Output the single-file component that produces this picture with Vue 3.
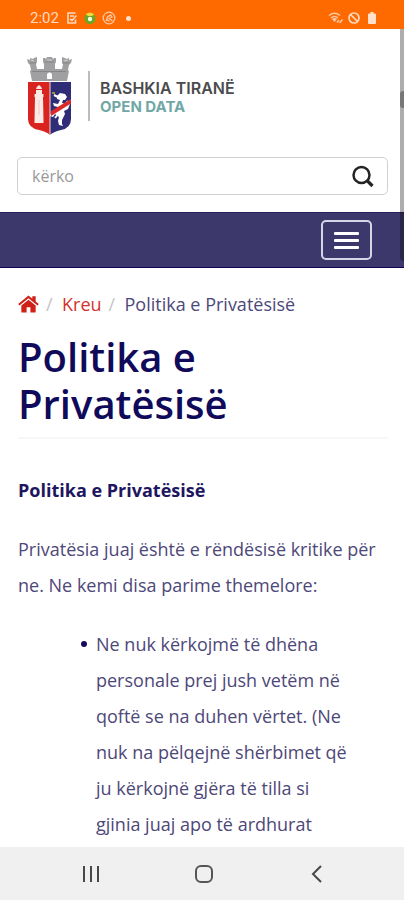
<script setup>
import { ref } from 'vue'

const query = ref('')
const principles = [
  'Ne nuk kërkojmë të dhëna personale prej jush vetëm në qoftë se na duhen vërtet. (Ne nuk na pëlqejnë shërbimet që ju kërkojnë gjëra të tilla si gjinia juaj apo të ardhurat'
]
</script>

<template>
  <div class="screen">
    <div class="status">
      <div class="status-group">
        <span class="clock">2:02</span>
        <svg width="12" height="14" viewBox="0 0 12 14" fill="none" stroke="#ffd9c0" stroke-width="1.6">
          <path d="M9.500 8.500V12H2V2h7.500M4 5h4M4 8l2 1.500L10.500 4.500" />
        </svg>
        <svg width="14" height="14" viewBox="0 0 14 14">
          <circle cx="7" cy="7.500" r="5.500" fill="#6aa524" />
          <path d="M3 3.500C4 1 10 1 11 3.500L9 5H5z" fill="#e8dc3c" />
          <circle cx="7" cy="8" r="2.200" fill="#f4ffe8" />
        </svg>
        <svg width="14" height="14" viewBox="0 0 14 14" fill="none" stroke="#ffc7a0" stroke-width="1.300">
          <circle cx="7" cy="7" r="5.800" />
          <path d="M4 10l1.500-4 3-2 1.500 2-3 1.500 3.500 2.500M4.500 8.500l3 2" />
        </svg>
        <span class="dot"></span>
      </div>
      <div class="status-group right">
        <svg width="16" height="14" viewBox="0 0 16 14" fill="none" stroke="#ffc9a5" stroke-width="1.500">
          <path d="M1 4.500q5.500-4.500 11 0M3 7q3.500-3 7 0" />
          <path d="M4 8q2.500-2 5 0L6.500 11z" fill="#ffc9a5" stroke="none" />
          <path d="M9 11.500l2-2.500M11.500 12l3-3.500" />
        </svg>
        <svg width="14" height="14" viewBox="0 0 14 14" fill="none" stroke="#ffd9c0" stroke-width="1.700">
          <circle cx="7" cy="7" r="5" />
          <path d="M3.500 3.500l7 7" />
        </svg>
        <svg class="battery" width="10" height="14" viewBox="0 0 10 14" fill="#ffe0cc">
          <path d="M3.500 1h3v1.500H8a1 1 0 0 1 1 1V12a1 1 0 0 1-1 1H2a1 1 0 0 1-1-1V3.500a1 1 0 0 1 1-1h1.500z" />
        </svg>
      </div>
    </div>

    <div class="page">
      <div class="scroll-track"><div class="scroll-thumb"></div></div>
      <header class="masthead">
        <a class="brand" href="#">
          <svg class="crest" width="48" height="82" viewBox="0 0 48 82" aria-hidden="true">
            <path d="M6 26L4 16l1-1-1-5-2-2L1 4l3 1V3l3 1 1-1 3-1v5l-1 2 1 5h7V9l-1-2V3h2l1 1 1-2h5l1 2 1-1h2v4l-1 2v5h7l1-5-1-2V2l3 1 1 1 3-1v2l3-1-1 4-2 2-1 5 1 1-2 10z" fill="#a0a0a2" />
            <path d="M4 8h6M36 8h7M19 7h9M6 16.500h34" stroke="#858588" stroke-width="1" />
            <path d="M5 5l3 1M38 6l4-1M21 5h5" stroke="#d2d2d3" stroke-width="1" />
            <path d="M21 24v-4a2.500 2.500 0 0 1 5 0v4z" fill="#fff" />
            <path d="M2 27h22v53q-3-3-11-5Q2 73 2 64z" fill="#d9231f" />
            <path d="M24 27h21v37q0 9-10 11-8 2-11 5z" fill="#302d77" />
            <path d="M24 27v53" stroke="#e7dbe6" stroke-width="1" />
            <path d="M8.500 65h9v3h-9zM9 42h8l.5 23h-9zM8.500 39h9v3h-9zM10 35h6v4h-6zM10 34q0-2 3-4 3 2 3 4z" fill="#fae9e5" />
            <path d="M13 45v15" stroke="#f0cac3" stroke-width="1" />
            <path d="M31 41l3-3 5 1 2 3-2 3h-2l-1 3 4 1 3-2 1 2-2 5-4 2 1 3-3 6 0 4 1 2-4-1-1-4 1-4-4-3-2 3-3-1 1-3 4-2 3-4-4-1-1-3 5 1 2-4-3-1z" fill="#fff" />
            <path d="M28 40l4 2M39 50l3-4M33 58l-4 5" stroke="#fff" stroke-width="2" />
            <path d="M26 37h3v2h-3z" fill="#998f3c" />
            <path d="M25 56l20-12v4.500L25 61z" fill="#da2928" />
          </svg>
          <span class="divider"></span>
          <span class="brand-text">
            <span class="city">BASHKIA TIRANË</span>
            <span class="open">OPEN DATA</span>
          </span>
        </a>
        <form class="search" @submit.prevent>
          <input v-model="query" type="text" placeholder="kërko" aria-label="kërko" />
          <button type="submit" aria-label="kërko">
            <svg width="24" height="24" viewBox="0 0 24 24" fill="none" stroke="#242424">
              <circle cx="10.500" cy="11" r="8" stroke-width="2.500" />
              <path d="M16 16.500l5.500 5.500" stroke-width="3.200" />
            </svg>
          </button>
        </form>
      </header>

      <div class="navbar">
        <button class="toggle" type="button" aria-label="Menu">
          <i></i><i></i><i></i>
        </button>
      </div>

      <main>
        <nav class="crumbs">
          <a href="#" aria-label="Kreu">
            <svg width="21" height="18" viewBox="0 0 22 18" fill="#cf2118">
              <path d="M11 4.500l7.500 6V17a1 1 0 0 1-1 1H13v-5.500H9V18H4.500a1 1 0 0 1-1-1v-6.500z" />
              <path d="M11 0L15 3.400V1h3.500v5.300L21.800 9l-1.300 1.700L11 2.900 1.500 10.700.2 9z" />
            </svg>
          </a>
          <span class="slash">/</span>
          <a href="#">Kreu</a>
          <span class="slash">/</span>
          <span class="current">Politika e Privatësisë</span>
        </nav>
        <h1>Politika e Privatësisë</h1>
        <article>
          <p><strong>Politika e Privatësisë</strong></p>
          <p>Privatësia juaj është e rëndësisë kritike për ne. Ne kemi disa parime themelore:</p>
          <ul>
            <li v-for="item in principles" :key="item">{{ item }}</li>
          </ul>
        </article>
      </main>
    </div>

    <div class="system-nav">
      <button type="button" aria-label="Recents">
        <svg width="20" height="20" viewBox="0 0 20 20" stroke="#484848" stroke-width="2"><path d="M3 2v16M10 2v16M17 2v16" /></svg>
      </button>
      <button type="button" aria-label="Home">
        <svg width="20" height="20" viewBox="0 0 20 20" fill="none" stroke="#555" stroke-width="2"><rect x="2" y="2" width="16" height="16" rx="5" /></svg>
      </button>
      <button type="button" aria-label="Back">
        <svg width="20" height="20" viewBox="0 0 20 20" fill="none" stroke="#484848" stroke-width="2"><path d="M14 2L6 10l8 8" /></svg>
      </button>
    </div>
  </div>
</template>

<style>
body {
  background: #fff;
}
</style>

<style scoped>
* {
  box-sizing: border-box;
}
.screen {
  display: flex;
  flex-direction: column;
  min-height: 100vh;
  font-family: "Open Sans", "Noto Sans", sans-serif;
  font-size: 18px;
  color: #4d4878;
}
button {
  padding: 0;
  border: 0;
  background: none;
}
svg {
  display: block;
}
a {
  color: #d2332c;
  text-decoration: none;
}
.status {
  display: flex;
  justify-content: space-between;
  height: 29px;
  padding: 7px 27px 0 30px;
  background: #ff6a00;
}
.status-group {
  display: flex;
  align-items: center;
  gap: 5px;
  height: 22px;
}
.status-group.right {
  gap: 3px;
}
.clock {
  margin-right: 2px;
  font-family: Roboto, sans-serif;
  font-size: 15px;
  color: #ffd9c0;
}
.dot {
  width: 5px;
  height: 5px;
  margin-left: 5px;
  border-radius: 50%;
  background: #ffe0cc;
}
.battery {
  margin-left: 3px;
}
.page {
  position: relative;
  flex: 1;
}
.scroll-track {
  position: absolute;
  top: 0;
  right: 0;
  width: 4px;
  height: 232px;
  background: rgba(0, 0, 0, 0.32);
  border-radius: 0 0 0 4px;
}
.scroll-thumb {
  height: 17px;
  margin-top: 62px;
  border-radius: 3px 0 0 3px;
  background: #777;
}
.masthead {
  padding: 26px 16px 17px 17px;
}
.brand {
  display: flex;
  align-items: center;
  gap: 10px;
  padding-left: 9px;
}
.divider {
  width: 2px;
  height: 50px;
  margin-left: 4px;
  background: #bcbcbc;
}
.brand-text {
  display: flex;
  flex-direction: column;
  padding-top: 3px;
  font-family: Inter, sans-serif;
}
.city {
  color: #4b4b4d;
  font-size: 16px;
  font-weight: 600;
  line-height: 19px;
}
.open {
  color: #71a7a6;
  font-size: 15px;
  font-weight: 700;
  line-height: 18px;
}
.search {
  display: flex;
  align-items: center;
  height: 38px;
  margin-top: 20px;
  padding: 0 12px 0 14px;
  border: 1px solid #d0d0d0;
  border-radius: 5px;
}
.search input {
  flex: 1;
  min-width: 0;
  padding: 0;
  border: 0;
  outline: 0;
  background: none;
  font: inherit;
  font-size: 16px;
  color: #443f72;
}
.search input::placeholder {
  color: #999;
  opacity: 1;
}
.navbar {
  display: flex;
  align-items: center;
  justify-content: flex-end;
  height: 56px;
  padding: 0 32px;
  background: #3c386c;
  border-top: 1px solid #28225c;
  border-bottom: 1px solid #0d0357;
}
.toggle {
  display: flex;
  flex-direction: column;
  align-items: center;
  justify-content: center;
  gap: 4px;
  width: 51px;
  height: 40px;
  border: 2px solid #d6d4e6;
  border-radius: 5px;
}
.toggle i {
  width: 25px;
  height: 3px;
  border-radius: 1px;
  background: #fff;
}
main {
  padding: 23px 16px 0 18px;
}
.crumbs {
  display: flex;
  align-items: center;
  height: 26px;
}
.slash {
  width: 23px;
  padding-left: 7px;
  color: #c4c4c4;
}
h1 {
  margin: 16px 0 0;
  padding-bottom: 10px;
  border-bottom: 2px solid #f7f7f9;
  font-size: 40px;
  font-weight: 600;
  line-height: 47px;
  color: #100a5a;
}
article {
  padding-top: 33px;
  line-height: 36px;
}
p {
  margin: 0 0 23px;
}
strong {
  font-weight: 700;
  color: #1e1660;
}
ul {
  margin: 0;
  padding: 0 36px 5px 63px;
  list-style: none;
}
li {
  display: grid;
  grid-template-columns: 6px 1fr;
  gap: 9px;
}
li::before {
  content: "";
  height: 6px;
  margin-top: 15px;
  border-radius: 50%;
  background: #150b60;
}
.system-nav {
  display: flex;
  align-items: center;
  justify-content: space-between;
  height: 53px;
  padding: 0 77px 0 81px;
  background: #f0f0f0;
}
</style>
